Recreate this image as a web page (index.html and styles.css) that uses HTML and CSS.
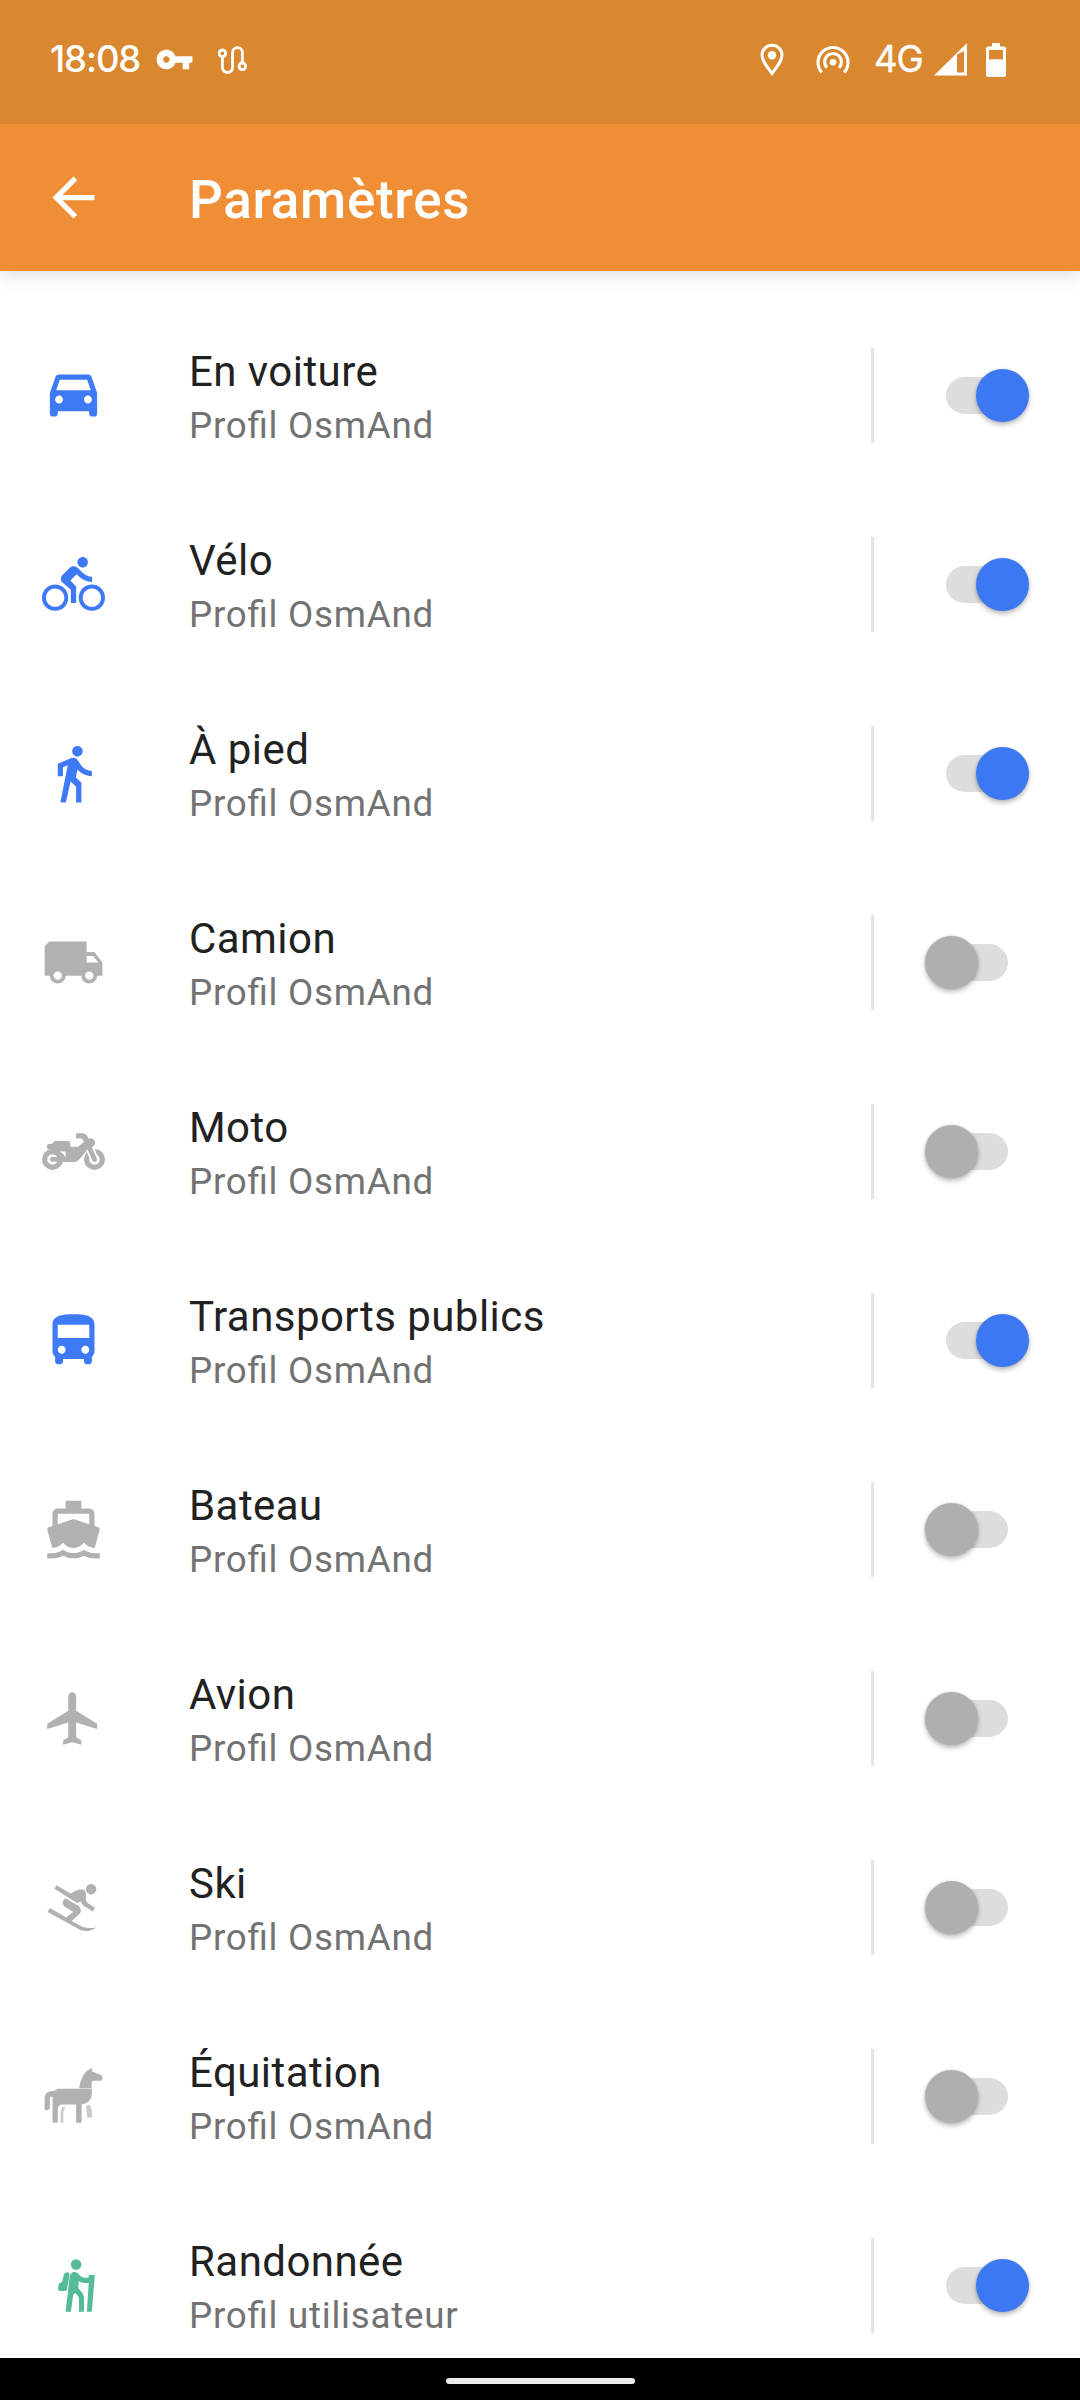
FILE: index.html
```html
<!DOCTYPE html>
<html lang="fr">
<head>
<meta charset="utf-8">
<title>Paramètres</title>
<link rel="stylesheet" href="styles.css">
</head>
<body>
<div class="screen">
  <div class="statusbar">
    <span class="clock">18:08</span>
    <svg class="st-key" viewBox="0 0 24 24"><path d="M12.65 10C11.83 7.67 9.61 6 7 6c-3.31 0-6 2.69-6 6s2.69 6 6 6c2.61 0 4.83-1.67 5.65-4H17v4h4v-4h2v-4H12.65zM7 14c-1.1 0-2-.9-2-2s.9-2 2-2 2 .9 2 2-.9 2-2 2z"/></svg>
    <svg class="st-route" viewBox="0 0 30 30"><g fill="none" stroke="#fff" stroke-width="2.9"><circle cx="4.4" cy="8.3" r="3.3"/><path d="M4.4 12v10.300a5.100 5.100 0 0 0 10.200 0V7.500a4.900 4.900 0 0 1 9.800 0V17.500"/><circle cx="24.300" cy="21.300" r="3.300"/></g></svg>
    <span class="spacer"></span>
    <svg class="st-pin" viewBox="0 0 24 34"><path fill="none" stroke="#fff" stroke-width="3" d="M12 30.500C6 22.500 2 17.500 2 12.200a10 10 0 0 1 20 0C22 17.500 18 22.500 12 30.500z"/><circle cx="12" cy="12.200" r="4.200"/></svg>
    <svg class="st-spot" viewBox="0 0 34 30"><g fill="none" stroke="#fff" stroke-width="3.100"><path d="M5.800 27.500a15 15 0 1 1 22.400 0"/><path d="M10.900 22.700a8.400 8.400 0 1 1 12.200 0"/></g><circle cx="17" cy="17.200" r="3.300"/></svg>
    <span class="net">4G</span>
    <svg class="st-signal" viewBox="0 0 33 33"><path d="M0 32.500L33 0v32.500zM23 11.500V29.500h7V8z" fill-rule="evenodd"/></svg>
    <svg class="st-batt" viewBox="0 0 20 34"><path fill-rule="evenodd" d="M6 0h8v3.500h4a2 2 0 0 1 2 2V32a2 2 0 0 1-2 2H2a2 2 0 0 1-2-2V5.500a2 2 0 0 1 2-2h4zM3 7v9.200h14V7z"/></svg>
  </div>
  <header class="toolbar">
    <svg class="icon" viewBox="0 0 24 24"><path d="M20 11H7.830l5.590-5.590L12 4l-8 8 8 8 1.410-1.410L7.830 13H20v-2z"/></svg>
    <h1 class="title">Paramètres</h1>
  </header>
  <main class="list">
    <div class="row">
      <svg class="icon blue" viewBox="0 1 24 24"><path d="M18.920 6.010C18.720 5.420 18.160 5 17.500 5h-11c-.66 0-1.210.42-1.420 1.010L3 12v8c0 .55.45 1 1 1h1c.55 0 1-.45 1-1v-1h12v1c0 .55.45 1 1 1h1c.55 0 1-.45 1-1v-8l-2.080-5.990zM6.500 16c-.83 0-1.500-.67-1.500-1.500S5.670 13 6.500 13s1.500.67 1.500 1.500S7.330 16 6.500 16zm11 0c-.83 0-1.500-.67-1.500-1.500s.67-1.500 1.500-1.500 1.500.67 1.500 1.500-.67 1.500-1.500 1.500zM5.400 11l1.400-4h10.400l1.400 4z"/></svg>
      <div class="text"><div class="name">En voiture</div><div class="sub">Profil OsmAnd</div></div>
      <div class="divider"></div><div class="switch on"><span class="thumb"></span></div>
    </div>
    <div class="row">
      <svg class="icon blue" viewBox="0 0 24 24"><path d="M15.500 5.500c1.100 0 2-.9 2-2s-.9-2-2-2-2 .9-2 2 .9 2 2 2zM5 12c-2.800 0-5 2.200-5 5s2.200 5 5 5 5-2.200 5-5-2.200-5-5-5zm0 8.500c-1.900 0-3.500-1.600-3.500-3.500s1.600-3.500 3.500-3.500 3.500 1.600 3.500 3.500-1.600 3.500-3.500 3.500zm5.800-10l2.400-2.400.8.8c1.300 1.300 3 2.100 5.100 2.100V9c-1.500 0-2.700-.6-3.600-1.500l-1.900-1.900c-.5-.4-1-.6-1.600-.6s-1.100.2-1.400.6L7.800 8.400c-.4.4-.6.9-.6 1.400 0 .6.2 1.100.6 1.400L11 14v5h2v-6.200l-2.200-2.300zM19 12c-2.800 0-5 2.200-5 5s2.200 5 5 5 5-2.200 5-5-2.200-5-5-5zm0 8.500c-1.900 0-3.500-1.600-3.500-3.500s1.600-3.500 3.500-3.500 3.500 1.600 3.500 3.500-1.600 3.500-3.500 3.500z"/></svg>
      <div class="text"><div class="name">Vélo</div><div class="sub">Profil OsmAnd</div></div>
      <div class="divider"></div><div class="switch on"><span class="thumb"></span></div>
    </div>
    <div class="row">
      <svg class="icon blue" viewBox="0 0 24 24"><path d="M13.500 5.500c1.100 0 2-.9 2-2s-.9-2-2-2-2 .9-2 2 .9 2 2 2zM9.800 8.900L7 23h2.100l1.800-8 2.100 2v6h2v-7.500l-2.100-2 .6-3C14.800 12 16.800 13 19 13v-2c-1.900 0-3.500-1-4.300-2.400l-1-1.600c-.4-.6-1-1-1.700-1-.3 0-.5.1-.8.1L6 8.300V13h2V9.600l1.800-.7"/></svg>
      <div class="text"><div class="name">À pied</div><div class="sub">Profil OsmAnd</div></div>
      <div class="divider"></div><div class="switch on"><span class="thumb"></span></div>
    </div>
    <div class="row">
      <svg class="icon gray" viewBox="0 0 24 24"><path fill-rule="evenodd" d="M2.800 4H17v4h3l3 4v5h-2a3 3 0 0 1-6 0H9a3 3 0 0 1-6 0H1V5.800zM17 9.500V12h4.460L19.500 9.500zM6 15.400a1.600 1.600 0 1 0 0 3.200 1.600 1.600 0 0 0 0-3.200zm12 0a1.600 1.600 0 1 0 0 3.200 1.600 1.600 0 0 0 0-3.200z"/></svg>
      <div class="text"><div class="name">Camion</div><div class="sub">Profil OsmAnd</div></div>
      <div class="divider"></div><div class="switch"><span class="thumb"></span></div>
    </div>
    <div class="row">
      <svg class="icon gray" viewBox="0 0 24 24"><g fill="none" stroke="#b1b1b1" stroke-width="2"><circle cx="4" cy="15" r="3"/><circle cx="20" cy="15" r="3"/></g><path fill-rule="evenodd" d="M3 9h1l.3-.5Q4.600 8 5.200 8h4.600q1 0 1 1v1.200h3L16 8.300 15.200 7H13V5h2.500q1.200 0 1.700 1l.6 1.100a1.700 1.700 0 1 1 .4 3.200l-4 4.700q-.8 1-2 1H7.500Q7.500 12.500 4.500 11.300H3A1 1 0 0 1 3 9zM6.700 12q1.700.9 2.300 2.200V12z"/><path d="M18.300 11l1.700 4" fill="none" stroke="#fff" stroke-width="3.200"/><path d="M4 15h4M17.400 9l2.600 6" fill="none" stroke="#b1b1b1" stroke-width="1.900" stroke-linecap="round"/></svg>
      <div class="text"><div class="name">Moto</div><div class="sub">Profil OsmAnd</div></div>
      <div class="divider"></div><div class="switch"><span class="thumb"></span></div>
    </div>
    <div class="row">
      <svg class="icon blue" viewBox="0 0 24 24"><path d="M4 16c0 .88.39 1.670 1 2.220V20c0 .55.45 1 1 1h1c.55 0 1-.45 1-1v-1h8v1c0 .55.45 1 1 1h1c.55 0 1-.45 1-1v-1.780c.61-.55 1-1.340 1-2.220V6c0-3.500-3.580-4-8-4s-8 .5-8 4v10zm3.500 1c-.83 0-1.500-.67-1.500-1.500S6.670 14 7.500 14s1.500.67 1.500 1.500S8.330 17 7.500 17zm9 0c-.83 0-1.500-.67-1.500-1.500s.67-1.500 1.500-1.500 1.500.67 1.500 1.500-.67 1.500-1.500 1.500zm1.500-6H6V6h12v5z"/></svg>
      <div class="text"><div class="name">Transports publics</div><div class="sub">Profil OsmAnd</div></div>
      <div class="divider"></div><div class="switch on"><span class="thumb"></span></div>
    </div>
    <div class="row">
      <svg class="icon gray" viewBox="0 0 24 24"><path d="M20 21c-1.390 0-2.780-.47-4-1.320-2.440 1.710-5.560 1.710-8 0C6.780 20.530 5.390 21 4 21H2v2h2c1.380 0 2.740-.35 4-.99 2.520 1.290 5.480 1.290 8 0 1.260.65 2.620.99 4 .99h2v-2h-2zM3.950 19H4c1.600 0 3.020-.88 4-2 .98 1.120 2.400 2 4 2s3.020-.88 4-2c.98 1.120 2.400 2 4 2h.05l1.890-6.680c.08-.26.06-.54-.06-.78s-.34-.42-.6-.5L20 10.620V6c0-1.100-.9-2-2-2h-3V1H9v3H6c-1.100 0-2 .9-2 2v4.620l-1.290.42c-.26.08-.48.26-.6.5s-.15.52-.06.78L3.950 19zM6 6h12v3.970L12 8 6 9.970V6z"/></svg>
      <div class="text"><div class="name">Bateau</div><div class="sub">Profil OsmAnd</div></div>
      <div class="divider"></div><div class="switch"><span class="thumb"></span></div>
    </div>
    <div class="row">
      <svg class="icon gray" viewBox="0 0 24 24"><path d="M21 16v-2l-8-5V3.500c0-.83-.67-1.500-1.500-1.500S10 2.670 10 3.500V9l-8 5v2l8-2.500V19l-2 1.500V22l3.500-1 3.500 1v-1.500L13 19v-5.500l8 2.500z"/></svg>
      <div class="text"><div class="name">Avion</div><div class="sub">Profil OsmAnd</div></div>
      <div class="divider"></div><div class="switch"><span class="thumb"></span></div>
    </div>
    <div class="row">
      <svg class="icon gray" viewBox="0 0 24 24"><circle cx="18.700" cy="5" r="2"/><path d="M5.500 3.500l5.400 3.200Q12.600 5.200 15 5.100q1.900 0 1.700 2v1.800q0 .9.700 1.400l2.800 1.800-.8 1.400-3.300-2q-1.200-.8-1.300-1.800l-1.400.6L4.700 4.900zM8.900 8.500l5 2.900q1.500 1.200.6 2.800l-3.200 2.900 4 2.200q2.800 1 5.500.2-2.600 2-5.800 1.300L2.100 13.700l.9-1.500 6.100 3.500 2.900-2-3.500-2.100Q7 10 8.900 8.500z"/></svg>
      <div class="text"><div class="name">Ski</div><div class="sub">Profil OsmAnd</div></div>
      <div class="divider"></div><div class="switch"><span class="thumb"></span></div>
    </div>
    <div class="row">
      <svg class="icon gray" viewBox="0 0 24 24"><path d="M14.100 8.850Q14.900 2.800 19 1v1.400l3.400 1.400Q23 4 23 5q0 1-1 1h-2.500q-.6 0-.6.700v2.150z"/><path d="M5 9.700L6 9h13v2q-.2 3.500-3.900 4V22H13v-7H7q-1 .7-1 2.100V22H4V12q-1 0-1 .7V16q0 1.200-1.200 1.200H1V13Q1 9.900 4 9.900z"/><path opacity=".7" d="M7.100 22v-4.200L7.800 16h1.100l-.8 2v4zM16.600 15.900l1.400-.9q1 1.200 1 3V20h-1.900v-2q0-1.200-.5-2.100z"/></svg>
      <div class="text"><div class="name">Équitation</div><div class="sub">Profil OsmAnd</div></div>
      <div class="divider"></div><div class="switch"><span class="thumb"></span></div>
    </div>
    <div class="row">
      <svg class="icon green" viewBox="0 0 24 24"><circle cx="13" cy="4" r="2"/><path d="M9.300 7q1.300-.2 1.200.9l-.9 5.200q-.1 1-1.100 1H6.900q-.8 0-.8-.8.200-2.300 1-2.400l.6-.2.600-2.700q.2-1 1-1zM12.400 6.900q1 0 1.500.6Q15 9 16.300 9h1.500V8h2.300L19 22h-1.900l.7-11h-1.600q-1.200 0-2.200-.6l-.2 2.600 1.300 1.500q.9 1 .9 2.500v5h-1.900v-4.700q0-.9-.5-1.400l-.9-1-.8.600L11 22H9l1.500-13q.3-2.100 1.900-2.100z"/></svg>
      <div class="text"><div class="name">Randonnée</div><div class="sub">Profil utilisateur</div></div>
      <div class="divider"></div><div class="switch on"><span class="thumb"></span></div>
    </div>
  </main>
  <footer class="navbar"><span class="pill"></span></footer>
</div>
</body>
</html>
```
FILE: styles.css
```css
* { box-sizing: border-box; }
body { margin: 0; background: #fff; font-family: Roboto, "Liberation Sans", sans-serif; }
.screen { width: 1080px; height: 2400px; display: flex; flex-direction: column; overflow: hidden; }
svg { display: block; flex: none; fill: currentColor; }

.statusbar {
  flex: none;
  height: 124px;
  padding: 0 74px 5px 50px;
  display: flex;
  align-items: center;
  background: #d98830;
  color: #fff;
  font: 500 36.5px/1 Inter, sans-serif;
}
.clock { width: 105px; letter-spacing: -1.1px; }
.spacer { flex: 1; }
.st-key { width: 39px; height: 39px; }
.st-route { width: 30px; height: 30px; margin-left: 24px; }
.st-pin { width: 24px; height: 34px; margin-right: 32px; }
.st-spot { width: 34px; height: 30px; margin-right: 24px; }
.net { width: 60px; letter-spacing: -1.2px; font-weight: 400; -webkit-text-stroke: .4px #fff; }
.st-signal { width: 33px; height: 33px; margin-right: 19px; }
.st-batt { width: 20px; height: 34px; }

.toolbar {
  flex: none;
  height: 147px;
  padding-left: 42px;
  display: flex;
  align-items: center;
  gap: 84px;
  background: #f08e35;
  color: #fff;
  box-shadow: 0 2px 18px rgba(0, 0, 0, .17);
  clip-path: inset(0 0 -30px 0);
}
.title { margin: 5px 0 0; font-size: 53px; line-height: 60px; font-weight: 500; letter-spacing: .65px; }

.list { flex: 1; min-height: 0; padding-top: 30px; overflow: hidden; }
.row { height: 189px; padding: 0 51px 0 42px; display: flex; align-items: center; }
.icon { width: 63px; height: 63px; }
.blue { color: #3f7af6; }
.gray { color: #b1b1b1; }
.green { color: #55bb96; }
.text { flex: 1; margin-left: 84px; padding-top: 6px; }
.name { font-size: 42px; line-height: 54px; letter-spacing: .45px; color: #212121; }
.sub { font-size: 36.75px; line-height: 53px; letter-spacing: .73px; font-feature-settings: "liga" 1; color: #727272; }
.divider { width: 3px; height: 95px; background: #e5e5e5; }
.switch { width: 104px; height: 53px; margin-left: 51px; display: flex; align-items: center; position: relative; }
.switch::before { content: ""; width: 62px; height: 37px; margin-left: 21px; border-radius: 19px; background: #ddd; }
.thumb {
  position: absolute;
  left: 0;
  top: 0;
  width: 53px;
  height: 53px;
  border-radius: 50%;
  background: #afafaf;
  box-shadow: 0 3px 5px rgba(0, 0, 0, .25), 0 0 3px rgba(0, 0, 0, .12);
}
.on .thumb { left: 51px; background: #3d78f3; }

.navbar { flex: none; height: 42px; display: flex; align-items: center; justify-content: center; background: #000; }
.pill { width: 189px; height: 6px; margin-top: 4px; border-radius: 3px; background: #ebebeb; }
```
